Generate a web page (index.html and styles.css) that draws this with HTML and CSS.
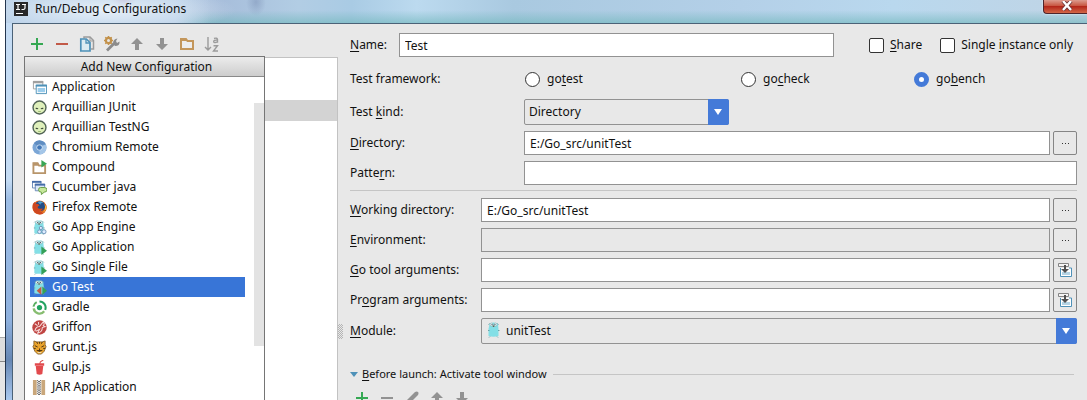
FILE: index.html
```html
<!DOCTYPE html>
<html lang="en">
<head>
<meta charset="utf-8">
<title>Run/Debug Configurations</title>
<link rel="stylesheet" href="styles.css">
</head>
<body>
<svg class="defs" aria-hidden="true">
  <defs>
    <symbol id="i-plus" viewBox="0 0 16 16"><path d="M7 2h2v5h5v2H9v5H7V9H2V7h5z" fill="#35a853"/></symbol>
    <symbol id="i-minus" viewBox="0 0 16 16"><path d="M2 7h12v2H2z" fill="#c25a48"/></symbol>
    <symbol id="i-up" viewBox="0 0 16 16"><path d="M8 2l6 6h-4v6H6V8H2z" fill="#929292"/></symbol>
    <symbol id="i-down" viewBox="0 0 16 16"><path d="M8 14l6-6h-4V2H6v6H2z" fill="#929292"/></symbol>
    <symbol id="i-gopher" viewBox="0 0 16 16">
      <path d="M3.500 2Q4 .5 7.500 .5T12 2l.5 5v7q-5 1.500-10 0V7z" fill="#84dfe6"/>
      <path d="M4 14.500l-1 1M11 14.500l1 1M2 8.500h1.500M12 8.500h1.500M2.500 2.500l1-1M12.500 2.500l-1-1" stroke="#6ba3a8"/>
      <circle cx="5.500" cy="2.600" r="1.500" fill="#f4fbfb" stroke="#87a4a8" stroke-width=".6"/><circle cx="9.500" cy="2.600" r="1.500" fill="#f4fbfb" stroke="#87a4a8" stroke-width=".6"/>
      <circle cx="6" cy="2.600" r=".6" fill="#345"/><circle cx="9" cy="2.600" r=".6" fill="#345"/><path d="M6.800 3.500h1.500V5H6.800z" fill="#6d5f4d"/>
    </symbol>
    <symbol id="i-alien" viewBox="0 0 16 16">
      <circle cx="8" cy="8" r="6.900" fill="#dff0bb" stroke="#526456" stroke-width="1.500"/>
      <path d="M3.500 8.400q2-.6 3.500 1-2.200 1-3.500-1M12.500 8.400q-2-.6-3.500 1 2.200 1 3.500-1" fill="#3d4b3b"/>
      <path d="M6.500 12.300h3" stroke="#9dbb73"/>
    </symbol>
    <symbol id="i-insert" viewBox="0 0 16 16">
      <path d="M3.500 6v8.500h11V6H12" fill="#fff" stroke="#4e91b8"/><path d="M5 10h8v3H5z" fill="#b4d3e4"/>
      <path d="M1.500 1.500h10v3h-10z" fill="#f5f5f5" stroke="#858585"/>
      <path d="M7 3h2v4h3l-4 4-4-4h3z" fill="#505050"/>
    </symbol>
  </defs>
</svg>

<div class="screen">
  <div class="desktop"></div>
  <div class="window">
    <header class="titlebar">
      <svg class="logo" viewBox="0 0 14 14" aria-hidden="true"><path d="M0 0h14v14H0z" fill="#292929"/><path d="M2 2.500h4M4 2.500v5M2 7.500h4M8 2.500h4M11 2.500v3.500q0 1.700-3.500 1.500M2 11.500h7" fill="none" stroke="#fff" stroke-width="1.200"/></svg>
      <h1 class="title">Run/Debug Configurations</h1>
      <button class="close" aria-label="Close"><svg viewBox="0 0 12 10"><path d="M2 0l8 9M10 0L2 9" stroke="#6d3436" stroke-width="4"/><path d="M2 0l8 9M10 0L2 9" stroke="#fff" stroke-width="2.400"/></svg></button>
    </header>

    <div class="content">
      <aside class="side">
        <div class="toolbar">
          <button class="tool" aria-label="Add"><svg viewBox="0 0 16 16"><use href="#i-plus"/></svg></button>
          <button class="tool" aria-label="Remove"><svg viewBox="0 0 16 16"><use href="#i-minus"/></svg></button>
          <button class="tool" aria-label="Copy"><svg viewBox="0 0 16 16"><path d="M5 2.500V1h6l3.500 3.500V13H12" fill="none" stroke="#9b9b9b" stroke-width="1.500"/><path d="M11 1v4h3.500" fill="none" stroke="#9b9b9b"/><path d="M1.800 3h5.500L11 6.500V15H1.800z" fill="#dcebf2" stroke="#4e91b8" stroke-width="1.700"/><path d="M7 3v4h4" fill="none" stroke="#4e91b8" stroke-width="1.300"/></svg></button>
          <button class="tool" aria-label="Edit defaults"><svg viewBox="0 0 16 16"><path d="M3 14.500l7-7" stroke="#8b8b8b" stroke-width="2.800"/><path d="M9 7.500Q9 3 13.500 2.500L12 5l1 2 2.500-1.500Q16 10 11 10z" fill="#8b8b8b"/><circle cx="4.500" cy="4.500" r="2.600" fill="none" stroke="#c3924b" stroke-width="2.200"/><path d="M4.500 0v2M4.500 7v2M0 4.500h2M7 4.500h2M1.300 1.300l1.300 1.300M6.400 6.400l1.300 1.300M1.300 7.700l1.300-1.300M6.400 2.600l1.300-1.300" stroke="#c3924b" stroke-width="1.500"/></svg></button>
          <button class="tool" aria-label="Move up"><svg viewBox="0 0 16 16"><use href="#i-up"/></svg></button>
          <button class="tool" aria-label="Move down"><svg viewBox="0 0 16 16"><use href="#i-down"/></svg></button>
          <button class="tool" aria-label="New folder"><svg viewBox="0 0 16 16"><path d="M2 13V3h5l1.500 2H14v8z" fill="#ededed" stroke="#c3965b" stroke-width="2"/><path d="M2 3h5l1 2H2z" fill="#c3965b"/></svg></button>
          <button class="tool" aria-label="Sort alphabetically"><svg viewBox="0 0 16 16"><path d="M4 1v13M1 11l3 3 3-3M10 2.500q3-1 3.500 1v3.200M13.500 4.200q-4-.3-3.800 1.500.5 1.600 3.800.2M9.500 9.700h4L9.500 15h4.500" fill="none" stroke="#9b9b9b" stroke-width="1.400"/></svg></button>
        </div>
        <div class="tree">
          <div class="tree-row"></div>
          <nav class="popup" aria-label="Add New Configuration">
            <h2 class="popup-title">Add New Configuration</h2>
            <div class="popup-list">
              <button class="item"><svg viewBox="0 0 16 16"><path d="M1.500 1.500h10v8h-10z" fill="#fff" stroke="#a0a0a0"/><path d="M1 1h11v2.500H1z" fill="#a0a0a0"/><path d="M4.500 5.500h11v9h-11z" fill="#fff" stroke="#4e91b8"/><path d="M4 5h12v2H4z" fill="#4e91b8"/><path d="M6 8.500h8v4.500H6z" fill="#9bcdec"/></svg>Application</button>
              <button class="item"><svg viewBox="0 0 16 16"><use href="#i-alien"/></svg>Arquillian JUnit</button>
              <button class="item"><svg viewBox="0 0 16 16"><use href="#i-alien"/></svg>Arquillian TestNG</button>
              <button class="item"><svg viewBox="0 0 16 16"><circle cx="8" cy="8" r="7.500" fill="#7ba6d6"/><path d="M8 8L2 3.500A7.500 7.500 0 0 1 15 5H8z" fill="#5f8dc2"/><path d="M8 8l6.500-3.500A7.500 7.500 0 0 1 8 15.500z" fill="#a4c6e8"/><circle cx="8" cy="8" r="3.200" fill="#d4e4f4"/><circle cx="8" cy="8" r="2.500" fill="#4277b7"/></svg>Chromium Remote</button>
              <button class="item"><svg viewBox="0 0 16 16"><path d="M1.500 14V3.500H6L7.500 6H14v8z" fill="#fff" stroke="#b8956a" stroke-width="2"/><path d="M1 3h5l2 3H1z" fill="#b8956a"/><path d="M10 0l6 4-6 4z" fill="#3aa655"/></svg>Compound</button>
              <button class="item"><svg viewBox="0 0 16 16"><path d="M.5 1.500h9v7h-9z" fill="#fff" stroke="#6787b6"/><path d="M0 1h10v2H0z" fill="#466da9"/><path d="M3.500 4.500h10v7h-10z" fill="#dce8f7" stroke="#6787b6"/><path d="M3 4h11v2H3z" fill="#466da9"/><path d="M9 8h4q3 0 3 2.500T13 13l-3 2.500V13Q7 13 7 10.500T9 8z" fill="#c6e89b" stroke="#659b42"/></svg>Cucumber java</button>
              <button class="item"><svg viewBox="0 0 16 16"><circle cx="8" cy="8" r="7.500" fill="#e56b21"/><circle cx="8.500" cy="6.500" r="5.500" fill="#234c86"/><path d="M6 2q4-2 6 1-3 0-3 2z" fill="#53a1cc"/><path d="M1 4l2-2 1 2q3-.5 4 2-2 0-2 2 1 2 3.500 1.200 1.500-.5 2 0Q10 12.500 7 12q4 2.500 7-3l.5-5Q17 9 13.500 13T4 14.200Q-.5 10.500 1 4z" fill="#cf4720"/><path d="M13 4q3 6-2.500 10 4.500-1 5-6.500Z" fill="#f9c13b"/></svg>Firefox Remote</button>
              <button class="item"><svg viewBox="0 0 16 16"><use href="#i-gopher"/><g fill="#dcecff" stroke="#6f93b8"><circle cx="9.500" cy="8.500" r="1.700"/><circle cx="8" cy="12.500" r="2"/><circle cx="12.800" cy="12.500" r="2.200"/></g></svg>Go App Engine</button>
              <button class="item"><svg viewBox="0 0 16 16"><use href="#i-gopher"/><path d="M10 7l6 4.500-6 4.500z" fill="#35a058"/></svg>Go Application</button>
              <button class="item"><svg viewBox="0 0 16 16"><use href="#i-gopher"/><path d="M10 7l6 4.500-6 4.500z" fill="#35a058"/></svg>Go Single File</button>
              <button class="item selected"><svg viewBox="0 0 16 16"><use href="#i-gopher"/><path d="M11 7l5 4.500-5 4.500z" fill="#35a058"/><path d="M10 7l-5 4.500 5 4.500z" fill="#c25a48"/></svg>Go Test</button>
              <button class="item"><svg viewBox="0 0 16 16"><circle cx="8" cy="8" r="2.800" fill="#20a35f"/><path d="M8 1.500A6.500 6.500 0 0 1 14 10.500" fill="none" stroke="#23a261" stroke-width="2.200"/><path d="M13 12A6.300 6.300 0 0 1 1.800 9" fill="none" stroke="#87bd70" stroke-width="2.500"/><path d="M1.500 7A6.500 6.500 0 0 1 5 2.200" fill="none" stroke="#5aaf61" stroke-width="2.200"/></svg>Gradle</button>
              <button class="item"><svg viewBox="0 0 16 16"><circle cx="8" cy="8" r="7.700" fill="#c04543"/><path d="M3 12q1-5 5-5l4-5q2 2 0 4l2 1-3 1q0 5-5 6l2-4-4 2M3 4l3 2M7 2v3" fill="none" stroke="#f6dcda" stroke-width="1.100"/></svg>Griffon</button>
              <button class="item"><svg viewBox="0 0 16 16"><path d="M2 1l3 1h6l3-1v4l1 2-2 5-3 3H6l-3-3-2-5 1-2z" fill="#e9a32b" stroke="#73501f" stroke-width=".8"/><path d="M5 2l1 2M11 2l-1 2M3 6l3 1.500M13 6l-3 1.500M8 2v2M5 11l3 1 3-1M8 9v3M2 9h2M12 9h2" stroke="#4b3215" stroke-width="1"/><path d="M6 13h4v1H6z" fill="#f9edd5"/></svg>Grunt.js</button>
              <button class="item"><svg viewBox="0 0 16 16"><path d="M8 5l1-3 3-2" fill="none" stroke="#db5354" stroke-width="1.200"/><path d="M3 3.500h10V6H3zM4 6.500h8l-1 8.500q-3 1.500-6 0z" fill="#e24a4d"/></svg>Gulp.js</button>
              <button class="item"><svg viewBox="0 0 16 16"><path d="M1 0h4v16H1zM10 0h4v16h-4z" fill="#c9a77b"/><path d="M6 0v16M9 0v16" stroke="#555" stroke-dasharray="1 1"/><path d="M7.500 1v15" stroke="#666" stroke-width="2" stroke-dasharray="1 1"/></svg>JAR Application</button>
              <button class="item" aria-label="Next configuration"><svg viewBox="0 0 16 16"><path d="M1 0h10v16H1z" fill="#777"/></svg></button>
            </div>
            <div class="thumb"></div>
          </nav>
        </div>
      </aside>

      <div class="splitter"><span class="grip"></span></div>

      <form class="form">
        <div class="row name-row">
          <label for="name"><u>N</u>ame:</label>
          <input class="field" id="name" type="text" value="Test">
          <div class="checks">
            <label class="option"><input class="check" type="checkbox"><span><u>S</u>hare</span></label>
            <label class="option"><input class="check" type="checkbox"><span>Single <u>i</u>nstance only</span></label>
          </div>
        </div>
        <div class="row wide radios-row" role="radiogroup" aria-labelledby="fw">
          <span id="fw">Test framework:</span>
          <div class="radios">
            <label class="option"><input class="radio" type="radio" name="fw"><span>go<u>t</u>est</span></label>
            <label class="option"><input class="radio" type="radio" name="fw"><span>go<u>c</u>heck</span></label>
            <label class="option"><input class="radio" type="radio" name="fw" checked><span>go<u>b</u>ench</span></label>
          </div>
        </div>
        <div class="row wide">
          <label for="kind">Test <u>k</u>ind:</label>
          <div class="combo kind"><select id="kind"><option>Directory</option></select><span class="arrow"></span></div>
        </div>
        <div class="row wide">
          <label for="dir"><u>D</u>irectory:</label>
          <div class="pair"><input class="field" id="dir" type="text" value="E:/Go_src/unitTest"><button type="button" class="more" aria-label="Browse directory"><span class="dots"></span></button></div>
        </div>
        <div class="row wide">
          <label for="pattern">Patte<u>r</u>n:</label>
          <input class="field" id="pattern" type="text">
        </div>
        <hr class="rule">
        <div class="row">
          <label for="wd"><u>W</u>orking directory:</label>
          <div class="pair"><input class="field" id="wd" type="text" value="E:/Go_src/unitTest"><button type="button" class="more" aria-label="Browse working directory"><span class="dots"></span></button></div>
        </div>
        <div class="row">
          <label for="env"><u>E</u>nvironment:</label>
          <div class="pair"><input class="field readonly" id="env" type="text" readonly><button type="button" class="more" aria-label="Edit environment"><span class="dots"></span></button></div>
        </div>
        <div class="row">
          <label for="gt"><u>G</u>o tool arguments:</label>
          <div class="pair"><input class="field" id="gt" type="text"><button type="button" class="more" aria-label="Expand Go tool arguments"><svg viewBox="0 0 16 16"><use href="#i-insert"/></svg></button></div>
        </div>
        <div class="row">
          <label for="pa">Pr<u>o</u>gram arguments:</label>
          <div class="pair"><input class="field" id="pa" type="text"><button type="button" class="more" aria-label="Expand program arguments"><svg viewBox="0 0 16 16"><use href="#i-insert"/></svg></button></div>
        </div>
        <div class="row">
          <label for="module"><u>M</u>odule:</label>
          <div class="combo with-icon"><select id="module"><option>unitTest</option></select><svg class="combo-icon" viewBox="0 0 16 16"><use href="#i-gopher"/></svg><span class="arrow"></span></div>
        </div>
        <div class="before">
          <span class="twisty"></span>
          <span class="before-label"><u>B</u>efore launch: Activate tool window</span>
          <span class="line"></span>
        </div>
        <div class="toolbar small">
          <button type="button" class="tool" aria-label="Add task"><svg viewBox="0 0 16 16"><use href="#i-plus"/></svg></button>
          <button type="button" class="tool" aria-label="Remove task"><svg viewBox="0 0 16 16"><path d="M2 7h12v2H2z" fill="#929292"/></svg></button>
          <button type="button" class="tool" aria-label="Edit task"><svg viewBox="0 0 16 16"><path d="M2 14l1-4 8-8q2-1 3 0t0 3l-8 8z" fill="#929292"/></svg></button>
          <button type="button" class="tool" aria-label="Move task up"><svg viewBox="0 0 16 16"><use href="#i-up"/></svg></button>
          <button type="button" class="tool" aria-label="Move task down"><svg viewBox="0 0 16 16"><use href="#i-down"/></svg></button>
        </div>
      </form>
    </div>
  </div>
</div>
</body>
</html>
```
FILE: styles.css
```css
* { box-sizing: border-box; }

body {
  margin: 0;
  font: 12px/20px "Noto Sans", "Open Sans", sans-serif;
  color: #111;
  overflow: hidden;
}

button, input, select { font: inherit; color: inherit; margin: 0; padding: 0; }
u { text-underline-offset: 2px; }
.defs { position: absolute; width: 0; height: 0; }

.screen { display: flex; height: 100vh; }
.desktop {
  flex: 0 0 5px;
  background: linear-gradient(#fff 0 337px, #aaa 337px 338px, #ddd 338px 361px, #888 361px 362px, #e5e5e5 362px);
}

.window {
  flex: 1;
  min-width: 0;
  display: flex;
  flex-direction: column;
  border-left: 1px solid #24364f;
  padding-left: 6px;
  background: linear-gradient(#c5dcf4 0 180px, #9dbde5 200px, #8fb1de 320px, #6687b4 360px, #a9c8ee);
}

.titlebar {
  flex: 0 0 23px;
  display: flex;
  align-items: flex-start;
  margin-left: -6px;
  padding-left: 8px;
  background:
    radial-gradient(ellipse 130px 24px at 100px 10px, rgba(235, 243, 250, .9), transparent),
    radial-gradient(ellipse 12px 8px at 118px 0, rgba(165, 140, 180, .6), transparent),
    radial-gradient(ellipse 10px 14px at 250px 2px, rgba(110, 130, 170, .4), transparent),
    linear-gradient(90deg, rgba(185, 208, 232, 1) 170px, rgba(185, 208, 232, 0) 205px),
    linear-gradient(transparent 45%, rgba(116, 184, 190, .65)),
    linear-gradient(90deg, #cadff2, #a7bedb 20%, #b2cde4 27%, #a9cbe4 32%, #bcdaef 38%, #a9c9e0 47%, #b4d0e8 68%, #b9d8ee 82%, #c0d4e5);
}
.logo { width: 14px; height: 14px; margin-top: 2px; }
.title { flex: 1; margin: 0 0 0 7px; font-size: 12px; line-height: 18px; font-weight: 400; }
.close {
  width: 44px;
  height: 14px;
  border: 1px solid #4f252b;
  border-top: 0;
  border-right: 0;
  border-radius: 0 0 0 4px;
  background: linear-gradient(#dc9b8e, #c85540 45%, #b4271a 50%, #d36747);
  box-shadow: 0 0 2px #fff;
}
.close svg { display: block; width: 12px; height: 10px; margin: -2px 0 0 17px; }

.content {
  flex: 1;
  min-height: 0;
  display: flex;
  border: solid #4b6277;
  border-width: 1px 0 0 1px;
  background: #e8e8e8;
}

.side { flex: 0 0 325px; display: flex; flex-direction: column; padding: 12px 0 0 11px; }
.toolbar { display: flex; gap: 9px; padding-left: 5px; }
.tool { width: 16px; height: 16px; border: 0; background: none; }
.tool svg { display: block; width: 16px; height: 16px; }

.tree {
  position: relative;
  flex: 1;
  margin-top: 5px;
  padding-top: 42px;
  border: solid #c2c2c2;
  border-width: 1px 1px 0;
  background: #fff;
}
.tree-row { height: 21px; background: #d3d3d3; }

.popup {
  position: absolute;
  top: -2px;
  left: -1px;
  bottom: 0;
  width: 241px;
  border: solid #757575;
  border-width: 1px 1px 0;
  background: #fff;
  overflow: hidden;
}
.popup-title {
  margin: 0;
  height: 20px;
  padding-left: 4px;
  border-bottom: 1px solid #8a8a8a;
  background: linear-gradient(#ececec, #cdcdcd);
  font-size: 12px;
  font-weight: 400;
  line-height: 20px;
  text-align: center;
}
.popup-list { padding: 0 19px 0 5px; }
.item {
  display: flex;
  align-items: center;
  gap: 5px;
  width: 100%;
  height: 20px;
  padding-left: 2px;
  border: 0;
  background: none;
  text-align: left;
  white-space: nowrap;
}
.item svg { width: 15px; height: 15px; flex: none; }
.item.selected { background: #3875d7; color: #fff; }
.thumb { position: absolute; right: 0; top: 46px; width: 10px; height: 243px; background: #e3e3e3; }

.splitter { flex: 0 0 12px; display: flex; align-items: flex-start; }
.grip {
  width: 5px;
  height: 15px;
  margin-top: 300px;
  background: repeating-conic-gradient(#b4b4b4 0 25%, transparent 0 50%) 0 0 / 2px 2px;
}

.form { flex: 1; min-width: 0; display: flex; flex-direction: column; gap: 6px; padding: 9px 10px 0 0; }
.row { display: grid; grid-template-columns: 131px minmax(0, 1fr); align-items: center; flex: none; }
.wide { grid-template-columns: 174px minmax(0, 1fr); }
.name-row { grid-template-columns: 49px minmax(0, 1fr) auto; }
.radios-row { padding: 5px 0 3px; }

.field {
  width: 100%;
  min-width: 0;
  height: 24px;
  padding: 0 5px;
  border: 1px solid #929292;
  background: #fff;
  outline: 0;
}
.readonly { background: #e8e8e8; }

.checks { display: flex; gap: 18px; padding: 0 4px 0 35px; }
.option { display: flex; align-items: center; gap: 6px; }
.check, .radio {
  appearance: none;
  width: 15px;
  height: 15px;
  border: 1px solid #333;
  border-radius: 2px;
  background: #fff;
}
.radio { border-radius: 50%; }
.radio:checked { border: 5px solid #447ad8; }
.radios { display: grid; grid-template-columns: 216fr 173fr 163fr; padding-left: 1px; line-height: 22px; }
.radios .option { gap: 7px; }

.pair { display: flex; gap: 3px; }
.more {
  flex: 0 0 24px;
  height: 24px;
  display: flex;
  align-items: center;
  justify-content: center;
  border: 1px solid #858585;
  border-radius: 2px;
  background: #e8e8e8;
}
.more svg { width: 16px; height: 16px; }
.dots { width: 7px; height: 1px; background: repeating-linear-gradient(90deg, #333 0 1px, transparent 1px 3px); }

.combo { position: relative; height: 26px; }
.kind { width: 205px; }
.combo select {
  appearance: none;
  display: block;
  width: 100%;
  height: 26px;
  padding: 0 26px 0 4px;
  border: 1px solid #929292;
  border-radius: 2px;
  background: #e8e8e8;
}
.with-icon select { padding-left: 24px; }
.combo-icon { position: absolute; left: 5px; top: 4px; width: 16px; height: 16px; pointer-events: none; }
.arrow {
  position: absolute;
  top: 0;
  right: 0;
  width: 21px;
  height: 26px;
  border-radius: 0 2px 2px 0;
  background: #447ad8;
  pointer-events: none;
}
.arrow::after {
  content: "";
  position: absolute;
  left: 6px;
  top: 10px;
  border: solid transparent;
  border-width: 6px 4px 0;
  border-top-color: #fff;
}

.rule { width: 100%; height: 1px; margin: -1px 0 1px; border: 0; background: #c5c5c5; flex: none; }

.before { display: flex; align-items: center; margin-top: 14px; padding-right: 3px; font-size: 11px; line-height: 20px; }
.twisty { border: solid transparent; border-width: 5px 4px 0; border-top-color: #4e91b8; }
.before-label { margin: 0 6px 0 4px; }
.line { flex: 1; height: 1px; background: #c5c5c5; }
.small { padding-left: 4px; }
```
